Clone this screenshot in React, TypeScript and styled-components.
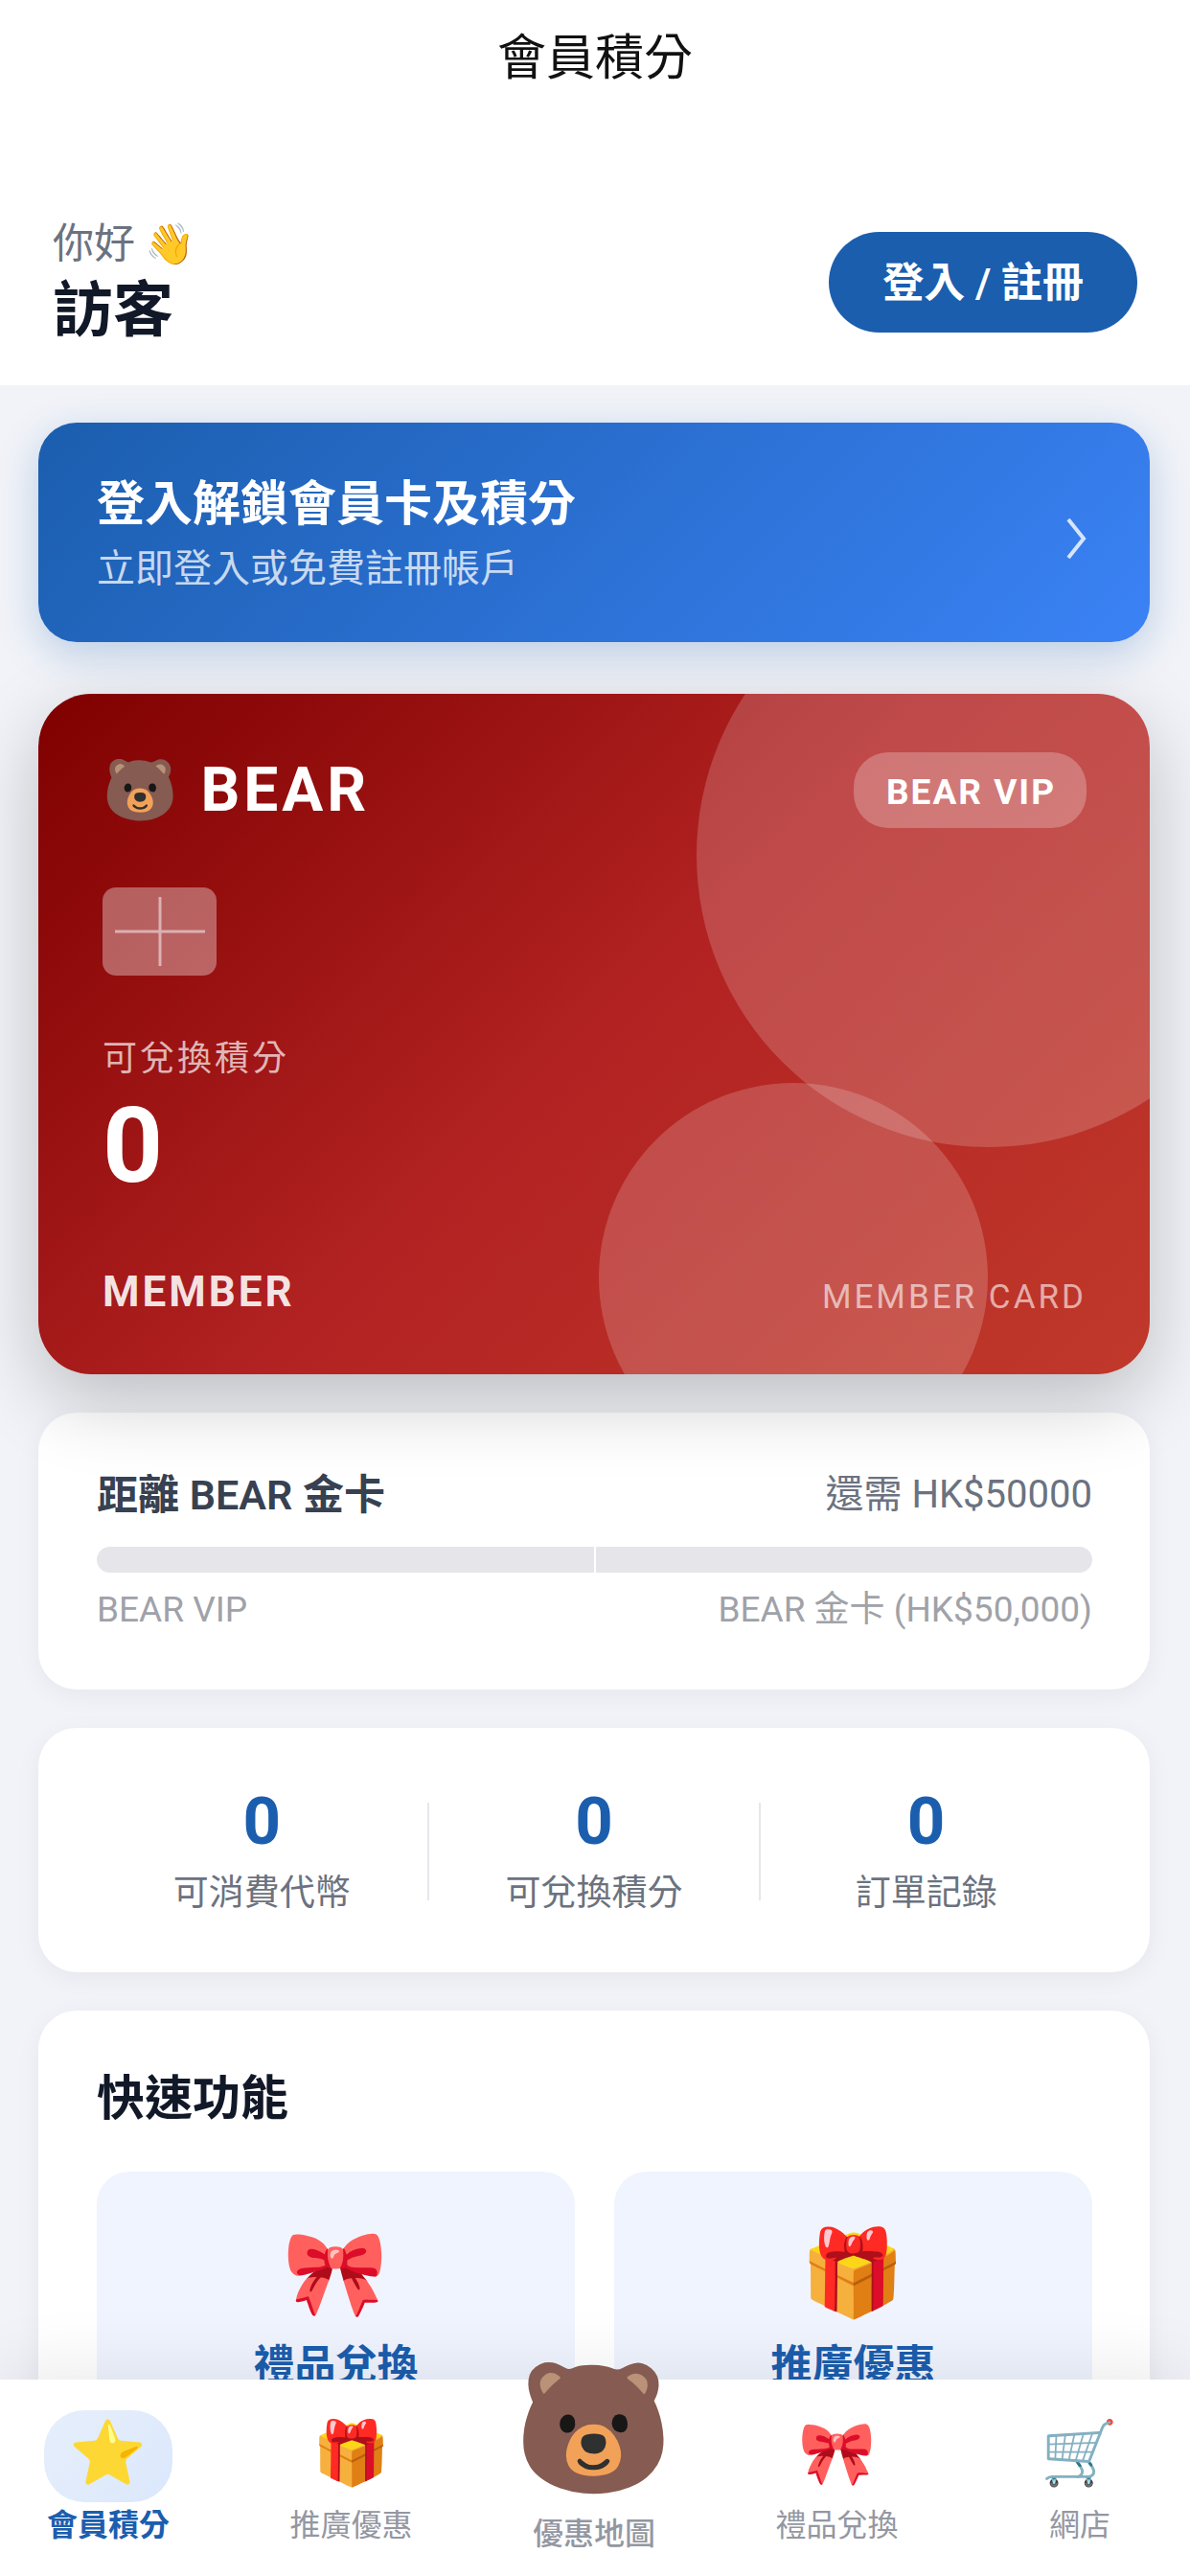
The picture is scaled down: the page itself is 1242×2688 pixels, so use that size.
import React from "react";
import styled, { createGlobalStyle } from "styled-components";

const GlobalStyle = createGlobalStyle`
  *, *::before, *::after { box-sizing: border-box; }
  body {
    margin: 0;
    background: #f1f3f8;
    font-family: Roboto, "Noto Sans CJK TC", sans-serif;
    -webkit-font-smoothing: antialiased;
  }
  button { font-family: inherit; cursor: pointer; }
  h1, h2, p { margin: 0; }
`;

const Shell = styled.div`
  display: flex;
  flex-direction: column;
  height: 100vh;
  overflow: hidden;
`;

const Scroller = styled.main`
  flex: 1;
  min-height: 0;
  overflow-y: auto;
  scrollbar-width: none;
`;

const TopBar = styled.header`
  display: flex;
  align-items: center;
  justify-content: center;
  height: 122px;
  background: #fff;
`;

const PageTitle = styled.h1`
  font-size: 51px;
  font-weight: 400;
  line-height: 64px;
  color: #111;
`;

const Greeting = styled.section`
  display: flex;
  align-items: center;
  justify-content: space-between;
  padding: 102px 55px 38px;
  background: #fff;
`;

const Hello = styled.p`
  font-size: 43px;
  line-height: 60px;
  color: #6b7280;
`;

const UserName = styled.p`
  font-size: 63px;
  font-weight: 700;
  line-height: 80px;
  color: #111827;
`;

const LoginButton = styled.button`
  height: 105px;
  padding: 2px 56px 0;
  border: 0;
  border-radius: 53px;
  background: #1b5eae;
  color: #fff;
  font-size: 43px;
  font-weight: 600;
  line-height: 60px;
`;

const Content = styled.div`
  display: flex;
  flex-direction: column;
  gap: 40px;
  padding: 39px 42px 80px 40px;
`;

const Banner = styled.button`
  display: flex;
  align-items: center;
  justify-content: space-between;
  margin-bottom: 14px;
  padding: 53px 64px 40px 61px;
  border: 0;
  border-radius: 40px;
  background: linear-gradient(135deg, #1b5eae 0%, #3b82f6 100%);
  box-shadow: 0 12px 40px rgba(27, 94, 174, 0.25);
  text-align: left;
  color: #fff;
`;

const BannerText = styled.span`
  display: flex;
  flex-direction: column;
`;

const BannerTitle = styled.span`
  font-size: 50px;
  font-weight: 700;
  line-height: 64px;
`;

const BannerHint = styled.span`
  font-size: 40px;
  line-height: 72px;
  color: rgba(255, 255, 255, 0.75);
`;

const MemberCard = styled.section`
  position: relative;
  z-index: 1;
  padding: 61px 66px 60px 67px;
  border-radius: 55px;
  background: linear-gradient(135deg, #7f0000 0%, #b22222 50%, #c0392b 100%);
  box-shadow: 0 27px 80px rgba(0, 0, 0, 0.22);
  color: #fff;
`;

const CardDecor = styled.div`
  position: absolute;
  inset: 0;
  overflow: hidden;
  border-radius: inherit;
`;

const BigCircle = styled.div`
  position: absolute;
  top: -136px;
  right: -136px;
  width: 609px;
  height: 609px;
  border-radius: 50%;
  background: rgba(255, 255, 255, 0.18);
`;

const SmallCircle = styled.div`
  position: absolute;
  bottom: -102px;
  right: 169px;
  width: 406px;
  height: 406px;
  border-radius: 50%;
  background: rgba(255, 255, 255, 0.18);
`;

const CardBody = styled.div`
  position: relative;
  display: flex;
  flex-direction: column;
  align-items: stretch;
`;

const CardRow = styled.div<{ $end?: boolean }>`
  display: flex;
  align-items: ${(p) => (p.$end ? "flex-end" : "center")};
  justify-content: space-between;
`;

const Brand = styled.div`
  display: flex;
  align-items: center;
  gap: 24px;
  font-size: 64px;
  font-weight: 700;
  letter-spacing: 4px;
  line-height: 79px;
`;

const TierPill = styled.span`
  padding: 5px 32px 0 34px;
  border-radius: 36px;
  background: rgba(255, 255, 255, 0.25);
  font-size: 37px;
  font-weight: 700;
  letter-spacing: 2px;
  line-height: 74px;
`;

const Chip = styled.div`
  display: grid;
  place-items: center;
  width: 119px;
  height: 92px;
  margin: 62px 0 65px;
  border-radius: 14px;
  background: rgba(255, 255, 255, 0.35);
`;

const PointsLabel = styled.p`
  font-size: 36px;
  letter-spacing: 3px;
  line-height: 44px;
  color: rgba(255, 255, 255, 0.7);
`;

const Points = styled.p`
  margin: 14px 0 71px;
  font-size: 110px;
  font-weight: 700;
  line-height: 110px;
`;

const MemberName = styled.span`
  font-size: 44px;
  font-weight: 700;
  letter-spacing: 3px;
  line-height: 52px;
  color: rgba(255, 255, 255, 0.88);
`;

const CardKind = styled.span`
  font-size: 35px;
  letter-spacing: 3px;
  line-height: 40px;
  color: rgba(255, 255, 255, 0.6);
`;

const Panel = styled.section`
  padding: 56px 60px 59px 61px;
  border-radius: 40px;
  background: #fff;
  box-shadow: 0 6px 27px rgba(0, 0, 0, 0.05);
`;

const SplitRow = styled.div`
  display: flex;
  align-items: center;
  justify-content: space-between;
`;

const GoalTitle = styled.h2`
  font-size: 43px;
  font-weight: 600;
  line-height: 60px;
  color: #374151;
`;

const GoalRemain = styled.span`
  font-size: 40px;
  line-height: 60px;
  color: #6b7280;
`;

const Track = styled.div`
  display: flex;
  justify-content: center;
  height: 27px;
  margin: 24px 0 15px;
  border-radius: 14px;
  background: #e5e5ea;
`;

const TrackMark = styled.div`
  width: 2px;
  background: #fff;
`;

const TierText = styled.span`
  font-size: 37px;
  line-height: 48px;
  color: #9fa2a9;
`;

const Stats = styled(Panel)`
  display: grid;
  grid-template-columns: repeat(3, 1fr);
  align-items: center;
  padding: 58px 60px 56px;
`;

const Stat = styled.div`
  position: relative;
  display: flex;
  flex-direction: column;
  align-items: center;
  gap: 9px;

  & + &::before {
    content: "";
    position: absolute;
    left: -1px;
    top: 20px;
    width: 2px;
    height: 102px;
    background: #e5e7eb;
  }
`;

const StatValue = styled.span`
  font-size: 69px;
  font-weight: 700;
  line-height: 80px;
  color: #1b5eae;
`;

const StatLabel = styled.span`
  font-size: 37px;
  line-height: 52px;
  color: #6b7280;
`;

const QuickPanel = styled(Panel)`
  padding-top: 60px;
`;

const SectionTitle = styled.h2`
  font-size: 50px;
  font-weight: 700;
  line-height: 64px;
  color: #111827;
`;

const Tiles = styled.div`
  display: grid;
  grid-template-columns: 1fr 1fr;
  gap: 41px;
  margin-top: 44px;
`;

const Tile = styled.button`
  display: flex;
  flex-direction: column;
  align-items: center;
  gap: 22px;
  padding: 62px 20px 48px;
  border: 0;
  border-radius: 34px;
  background: #f0f4ff;
  color: #1b5eae;
  font-size: 43px;
  font-weight: 600;
  line-height: 60px;
`;

const TabBar = styled.nav`
  position: relative;
  z-index: 2;
  display: flex;
  align-items: flex-start;
  justify-content: space-between;
  padding: 32px 42px 22px 40px;
  background: #fff;
  box-shadow: 0 -14px 68px rgba(0, 0, 0, 0.08);
`;

const Tab = styled.button<{ $active?: boolean }>`
  display: flex;
  flex-direction: column;
  align-items: center;
  gap: 2px;
  width: 146px;
  padding: 0;
  border: 0;
  background: none;
  color: ${(p) => (p.$active ? "#1b5eae" : "#9497a2")};
  font-size: 32px;
  font-weight: ${(p) => (p.$active ? 700 : 400)};
  line-height: 44px;
`;

const TabIcon = styled.span<{ $active?: boolean }>`
  display: grid;
  place-items: center;
  width: 134px;
  height: 96px;
  padding-bottom: 6px;
  border-radius: 42px;
  background: ${(p) => (p.$active ? "linear-gradient(135deg, #e6effb, #dbe7fc)" : "none")};
`;

const MapTab = styled(Tab)`
  gap: 20px;
  margin-top: -47px;
  font-weight: 500;
`;

const Emoji = styled.span<{ $size: number }>`
  font-family: "Noto Color Emoji", sans-serif;
  font-size: ${(p) => p.$size}px;
  font-weight: 400;
  letter-spacing: 0;
  line-height: 1;
`;

export default function App() {
  return (
    <>
      <GlobalStyle />
      <Shell>
        <Scroller>
          <TopBar>
            <PageTitle>會員積分</PageTitle>
          </TopBar>
          <Greeting>
            <div>
              <Hello>
                你好 <Emoji $size={42}>👋</Emoji>
              </Hello>
              <UserName>訪客</UserName>
            </div>
            <LoginButton type="button">登入 / 註冊</LoginButton>
          </Greeting>
          <Content>
            <Banner type="button">
              <BannerText>
                <BannerTitle>登入解鎖會員卡及積分</BannerTitle>
                <BannerHint>立即登入或免費註冊帳戶</BannerHint>
              </BannerText>
              <svg width="24" height="44" viewBox="0 0 24 44" fill="none" stroke="rgba(255,255,255,0.8)" strokeWidth="4">
                <path d="M3 2 L19 22 L3 42" />
              </svg>
            </Banner>
            <MemberCard>
              <CardDecor>
                <BigCircle />
                <SmallCircle />
              </CardDecor>
              <CardBody>
                <CardRow>
                  <Brand>
                    <Emoji $size={63}>🐻</Emoji>BEAR
                  </Brand>
                  <TierPill>BEAR VIP</TierPill>
                </CardRow>
                <Chip>
                  <svg width="94" height="72" viewBox="0 0 94 72" stroke="rgba(255,255,255,0.5)" strokeWidth="3">
                    <path d="M0 36 H94 M47 0 V72" />
                  </svg>
                </Chip>
                <PointsLabel>可兌換積分</PointsLabel>
                <Points>0</Points>
                <CardRow $end>
                  <MemberName>MEMBER</MemberName>
                  <CardKind>MEMBER CARD</CardKind>
                </CardRow>
              </CardBody>
            </MemberCard>
            <Panel>
              <SplitRow>
                <GoalTitle>距離 BEAR 金卡</GoalTitle>
                <GoalRemain>還需 HK$50000</GoalRemain>
              </SplitRow>
              <Track>
                <TrackMark />
              </Track>
              <SplitRow>
                <TierText>BEAR VIP</TierText>
                <TierText>BEAR 金卡 (HK$50,000)</TierText>
              </SplitRow>
            </Panel>
            <Stats>
              {["可消費代幣", "可兌換積分", "訂單記錄"].map((label) => (
                <Stat key={label}>
                  <StatValue>0</StatValue>
                  <StatLabel>{label}</StatLabel>
                </Stat>
              ))}
            </Stats>
            <QuickPanel>
              <SectionTitle>快速功能</SectionTitle>
              <Tiles>
                <Tile type="button">
                  <Emoji $size={88}>🎀</Emoji>禮品兌換
                </Tile>
                <Tile type="button">
                  <Emoji $size={88}>🎁</Emoji>推廣優惠
                </Tile>
              </Tiles>
            </QuickPanel>
          </Content>
        </Scroller>
        <TabBar>
          <Tab type="button" $active>
            <TabIcon $active>
              <Emoji $size={65}>⭐</Emoji>
            </TabIcon>
            會員積分
          </Tab>
          <Tab type="button">
            <TabIcon>
              <Emoji $size={65}>🎁</Emoji>
            </TabIcon>
            推廣優惠
          </Tab>
          <MapTab type="button">
            <Emoji $size={134}>🐻</Emoji>
            優惠地圖
          </MapTab>
          <Tab type="button">
            <TabIcon>
              <Emoji $size={65}>🎀</Emoji>
            </TabIcon>
            禮品兌換
          </Tab>
          <Tab type="button">
            <TabIcon>
              <Emoji $size={65}>🛒</Emoji>
            </TabIcon>
            網店
          </Tab>
        </TabBar>
      </Shell>
    </>
  );
}
